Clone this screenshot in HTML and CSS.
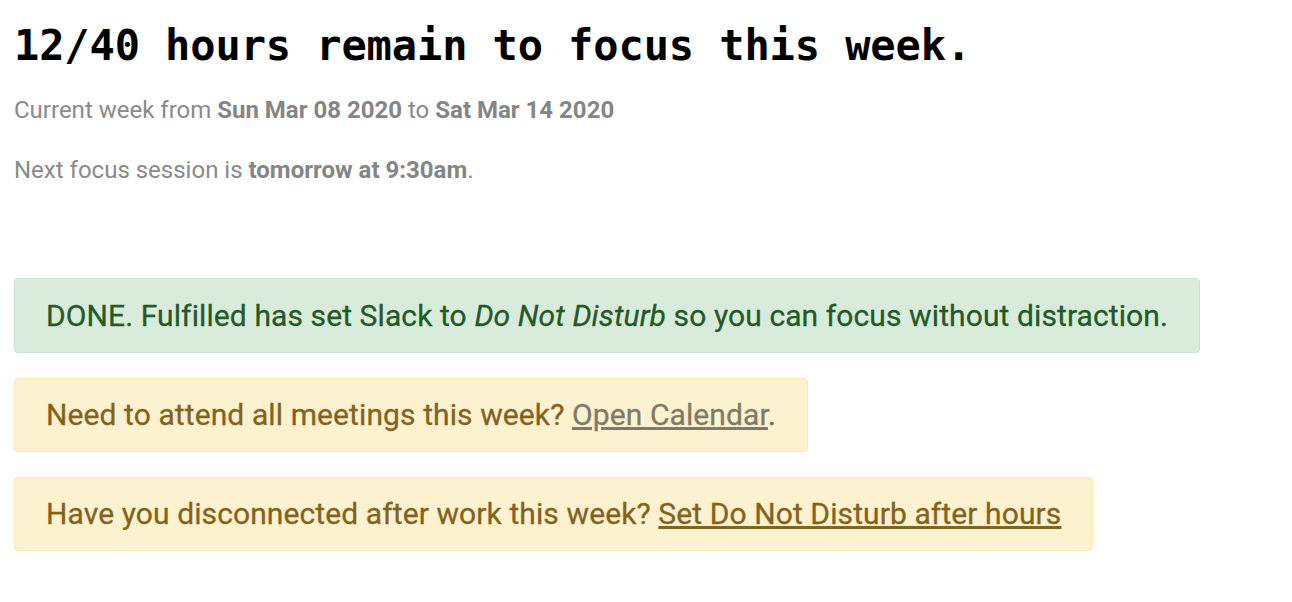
FILE: index.html
```html
<!DOCTYPE html>
<html>
<head>
<meta charset="utf-8">
<link rel="stylesheet" href="styles.css">
</head>
<body>
<main class="page">
  <h1 class="title">12/40 hours remain to focus this week.</h1>
  <p class="meta">Current week from <b>Sun Mar 08 2020</b> to <b>Sat Mar 14 2020</b></p>
  <p class="meta">Next focus session is <b>tomorrow at 9:30am</b>.</p>
  <div class="alerts">
    <div class="alert alert-success">DONE. Fulfilled has set Slack to <i>Do Not Disturb</i> so you can focus without distraction.</div>
    <div class="alert alert-warning">Need to attend all meetings this week? <a class="link-muted" href="#">Open Calendar</a>.</div>
    <div class="alert alert-warning">Have you disconnected after work this week? <a class="link" href="#">Set Do Not Disturb after hours</a></div>
  </div>
</main>
</body>
</html>
```
FILE: styles.css
```css
html, body {
  margin: 0;
  padding: 0;
  background: #fff;
}
.page {
  padding: 18px 14px 0 14px;
  font-family: Roboto, "Liberation Sans", sans-serif;
}
.title {
  margin: 0;
  font-family: "DejaVu Sans Mono", "Liberation Mono", monospace;
  font-weight: bold;
  font-size: 42px;
  line-height: 56px;
  letter-spacing: -0.1px;
  color: #000;
}
.meta {
  margin: 22px 0 0 0;
  font-size: 24px;
  line-height: 28px;
  color: #8a8a8a;
}
.meta + .meta {
  margin-top: 32px;
}
.meta b {
  font-weight: bold;
  color: #858585;
}
.alerts {
  margin-top: 94px;
  display: flex;
  flex-direction: column;
  align-items: flex-start;
  gap: 25px;
}
.alert {
  font-size: 30px;
  font-weight: 400;
  line-height: 32px;
  letter-spacing: 0.1px;
  padding: 20px 31px;
  border: 1px solid transparent;
  border-radius: 4px;
  -webkit-text-stroke: 0.3px currentColor;
}
.alert-success {
  background: #d9ecdc;
  border-color: #c5e5cc;
  color: #245a27;
  padding-top: 21px;
}
.alert-warning {
  background: #fdf2cf;
  border-color: #fbe9b4;
  color: #84621c;
}
.link-muted {
  color: #817a66;
  text-decoration: underline;
}
.link {
  color: #84621c;
  text-decoration: underline;
}
```
